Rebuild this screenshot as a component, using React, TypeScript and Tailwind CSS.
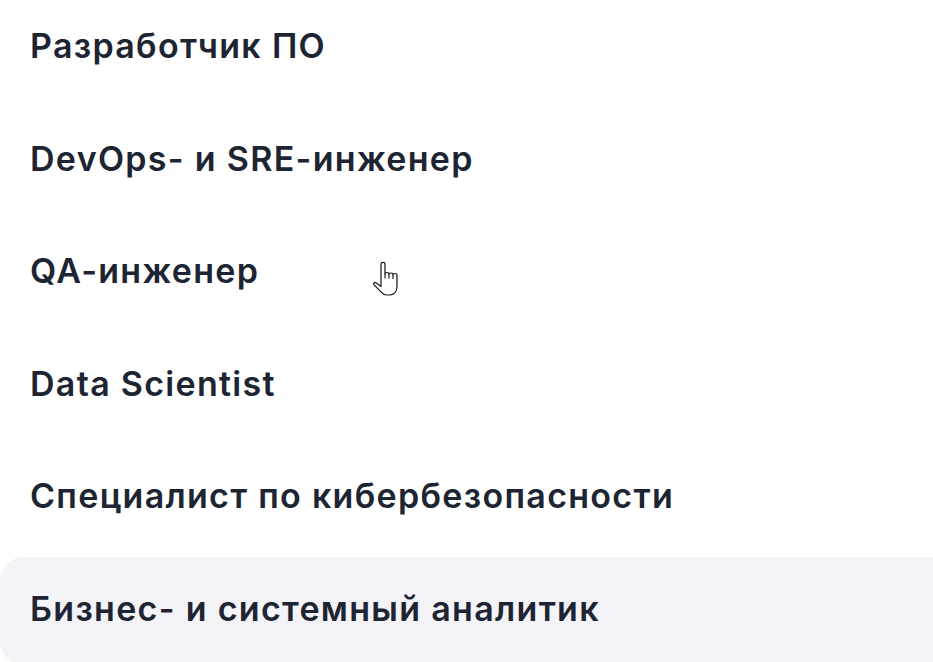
const roles = [
  "Разработчик ПО",
  "DevOps- и SRE-инженер",
  "QA-инженер",
  "Data Scientist",
  "Специалист по кибербезопасности",
  "Бизнес- и системный аналитик",
];

// pointer cursor caught in the screenshot
function HandCursor() {
  return (
    <svg width="28" height="36" viewBox="0 0 28 36" className="absolute left-[372px] top-[261px]">
      <path
        d="M9 3C9 0.8 13 0.8 13 3V13C13 11 17 11 17 13V13.5C17 11.5 21 11.5 21 13.5V14C21 12 25 12 25 14V25C25 30.5 22 34 17.5 34H15C12.5 34 10.8 32.8 9 30.8L2 23.8C0.8 22.5 2.5 20.7 3.9 21.8L9 25.5Z"
        fill="#fff"
        stroke="#111"
        strokeWidth="1.2"
        strokeLinejoin="round"
      />
      <path d="M13 13V17.5M17 13.5V17.5M21 14V18" stroke="#111" strokeWidth="1.1" />
    </svg>
  );
}

export default function App() {
  return (
    <div className="relative w-[933px] h-[662px] overflow-hidden bg-white" style={{ fontFamily: "Inter, 'Noto Sans', sans-serif" }}>
      <div className="flex flex-col gap-[9.6px] -mt-[6px]">
        {roles.map((r, i) => {
          const active = i === roles.length - 1;
          return (
            <div
              key={r}
              className={`flex items-center pl-[30px] ${active ? "h-[108px] pb-[5px] rounded-l-[24px] bg-[#f3f3f8]" : "h-[103px]"}`}
            >
              <span className="text-[34px] font-semibold text-[#1d2533] tracking-[1.3px]">{r}</span>
            </div>
          );
        })}
      </div>
      <HandCursor />
    </div>
  );
}
